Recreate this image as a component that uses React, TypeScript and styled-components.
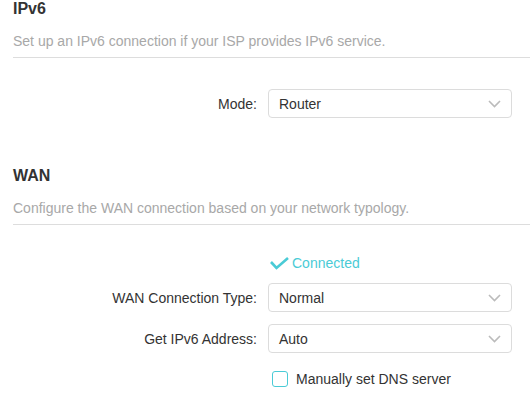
import React from "react";
import styled, { createGlobalStyle } from "styled-components";

const Global = createGlobalStyle`
  html, body { margin: 0; padding: 0; background: #ffffff; }
  body { font-family: "Liberation Sans", Arial, sans-serif; color: #333333; }
  * { box-sizing: border-box; }
`;

const Page = styled.div`
  width: 530px;
  padding-left: 13px;
  overflow: hidden;
`;

const Section = styled.section<{ $gap: number }>`
  margin-top: ${(p) => p.$gap}px;
`;

const Header = styled.div`
  border-bottom: 1px solid #dddddd;
  padding-bottom: 6px;
  margin-right: -20px;
`;

const Title = styled.h2`
  margin: 0;
  font-size: 16px;
  font-weight: bold;
  line-height: 18px;
  color: #333333;
`;

const Desc = styled.p`
  margin: 14px 0 0;
  font-size: 14px;
  line-height: 19px;
  color: #a8a8a8;
`;

const Form = styled.div<{ $top: number }>`
  display: flex;
  flex-direction: column;
  padding-top: ${(p) => p.$top}px;
`;

const Row = styled.div<{ $mt?: number }>`
  display: flex;
  align-items: center;
  margin-top: ${(p) => p.$mt ?? 0}px;
`;

const Label = styled.div`
  width: 244px;
  margin-right: 11px;
  text-align: right;
  font-size: 14px;
  color: #333333;
  line-height: 20px;
`;

const SelectBox = styled.div`
  width: 244px;
  height: 29px;
  border: 1px solid #dcdcdc;
  border-radius: 4px;
  display: flex;
  align-items: center;
  justify-content: space-between;
  padding: 0 10px 0 10px;
  font-size: 14px;
  color: #333333;
  background: #ffffff;
`;

const Status = styled.div`
  display: flex;
  align-items: center;
  gap: 3px;
  padding-left: 2px;
  font-size: 14px;
  line-height: 20px;
  color: #4acbd6;
`;

const CheckLabel = styled.label`
  display: flex;
  align-items: center;
  gap: 8px;
  padding-left: 4px;
  font-size: 14px;
  line-height: 20px;
  color: #333333;
`;

const Box = styled.span`
  width: 16px;
  height: 16px;
  border: 1.5px solid #4acbd6;
  border-radius: 3px;
  display: inline-block;
`;

const Chevron = () => (
  <svg width="13" height="8" viewBox="0 0 13 8">
    <path d="M1 1 L6.5 6.5 L12 1" fill="none" stroke="#bbbbbb" strokeWidth="1.6" />
  </svg>
);

const Check = () => (
  <svg width="19" height="13" viewBox="0 0 19 13">
    <path d="M1 5 L6.5 11 L18 1" fill="none" stroke="#4acbd6" strokeWidth="2.6" />
  </svg>
);

const Select = ({ value }: { value: string }) => (
  <SelectBox>
    <span>{value}</span>
    <Chevron />
  </SelectBox>
);

export default function App() {
  return (
    <Page>
      <Global />
      <Section $gap={0}>
        <Header>
          <Title>IPv6</Title>
          <Desc>Set up an IPv6 connection if your ISP provides IPv6 service.</Desc>
        </Header>
        <Form $top={31}>
          <Row>
            <Label>Mode:</Label>
            <Select value="Router" />
          </Row>
        </Form>
      </Section>
      <Section $gap={49}>
        <Header>
          <Title>WAN</Title>
          <Desc>Configure the WAN connection based on your network typology.</Desc>
        </Header>
        <Form $top={28}>
          <Row>
            <Label />
            <Status>
              <Check />
              <span>Connected</span>
            </Status>
          </Row>
          <Row $mt={10}>
            <Label>WAN Connection Type:</Label>
            <Select value="Normal" />
          </Row>
          <Row $mt={12}>
            <Label>Get IPv6 Address:</Label>
            <Select value="Auto" />
          </Row>
          <Row $mt={16}>
            <Label />
            <CheckLabel>
              <Box />
              <span>Manually set DNS server</span>
            </CheckLabel>
          </Row>
        </Form>
      </Section>
    </Page>
  );
}
